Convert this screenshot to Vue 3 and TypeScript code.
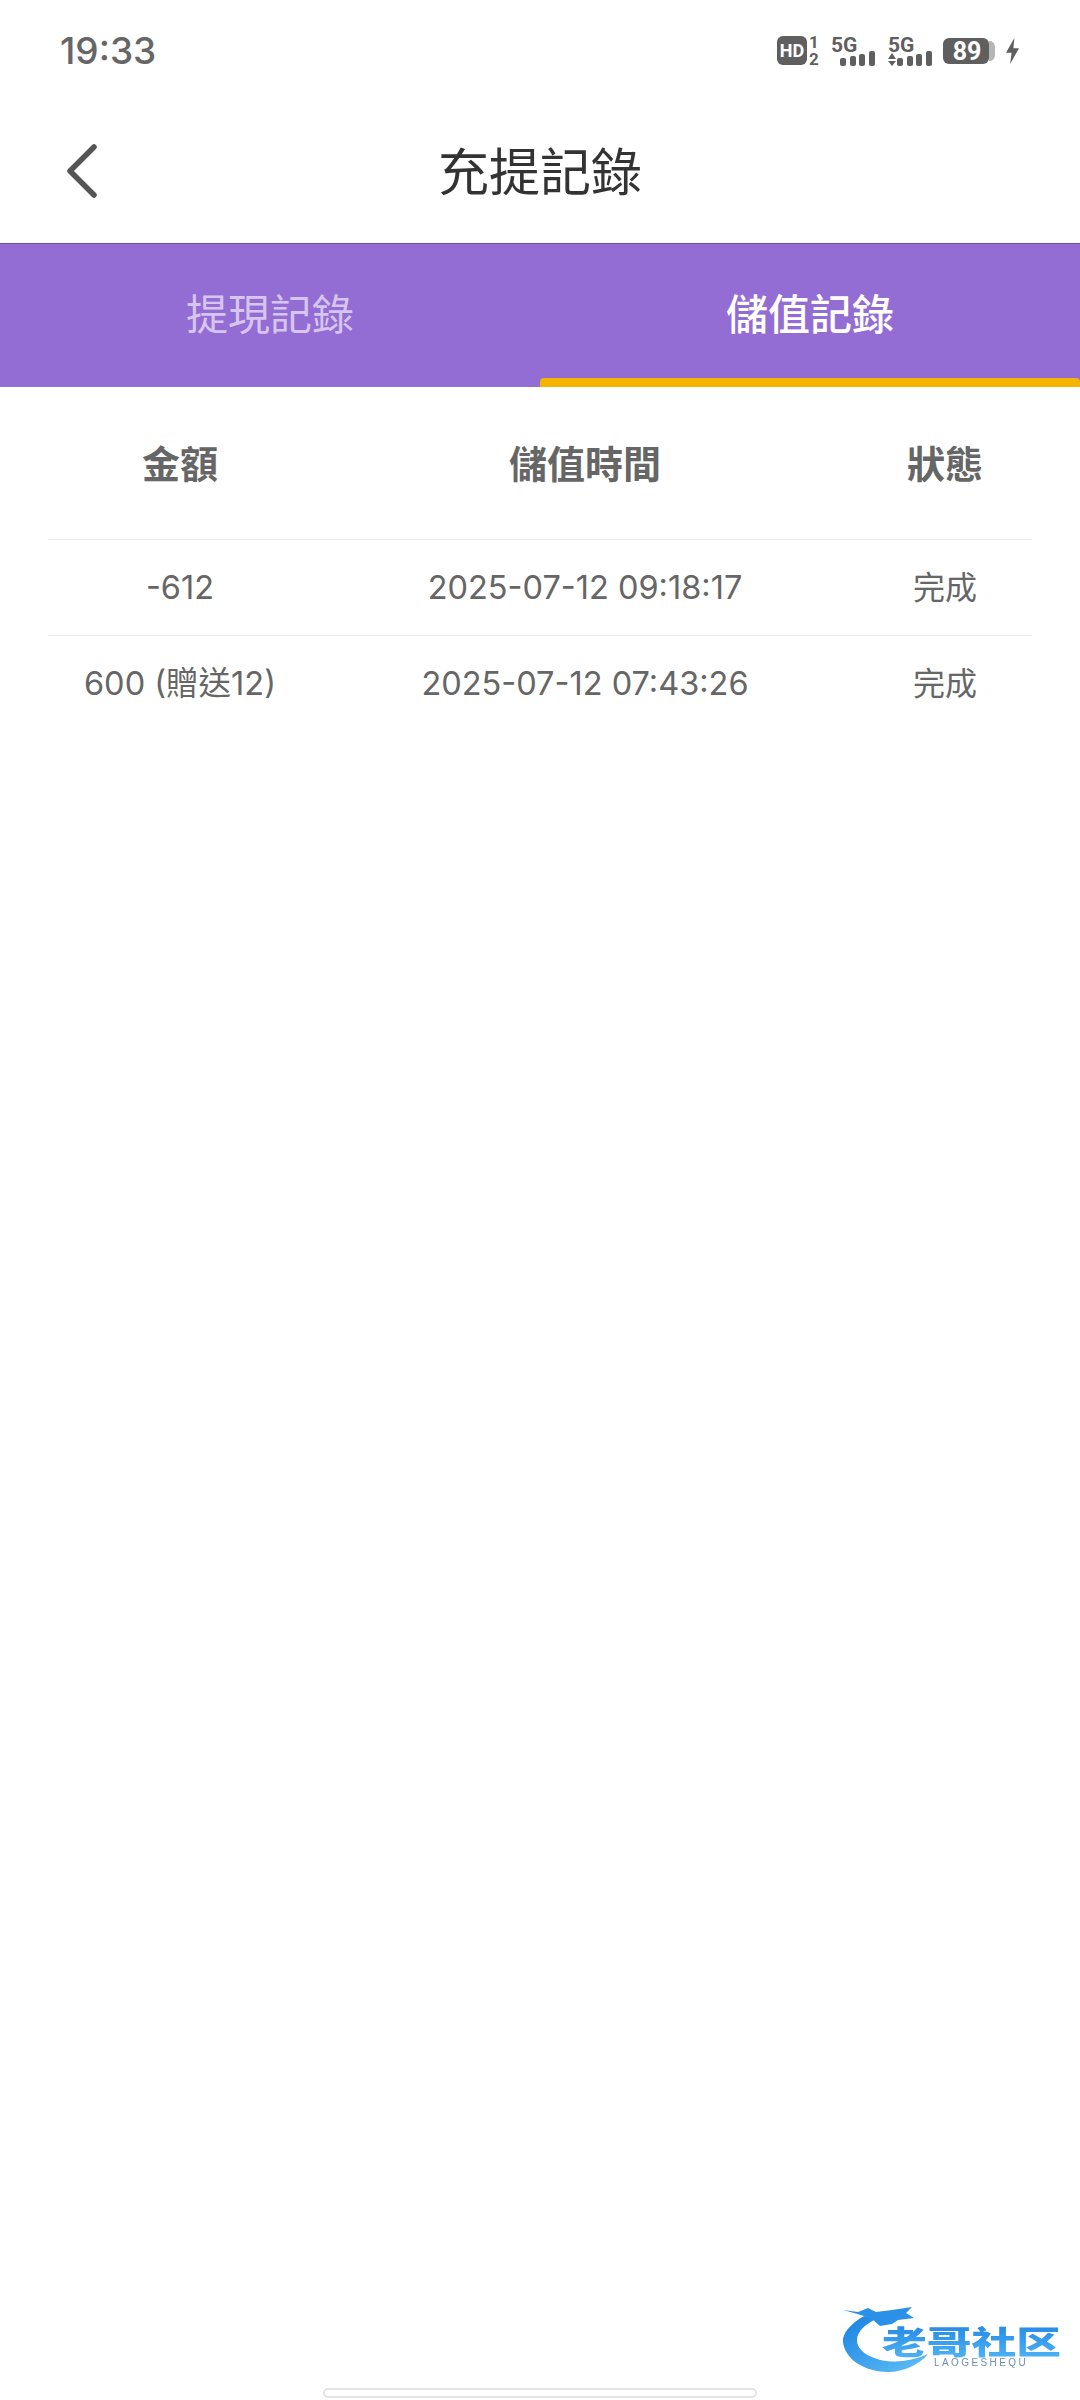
<script setup lang="ts">
import { ref } from 'vue'

interface RecordRow {
  amount: string
  time: string
  status: string
}

const tabs = ['提現記錄', '儲值記錄']
const activeTab = ref(1)

const rows: RecordRow[] = [
  { amount: '-612', time: '2025-07-12 09:18:17', status: '完成' },
  { amount: '600 (贈送12)', time: '2025-07-12 07:43:26', status: '完成' },
]

const bars = [
  { x: 9, h: 8 },
  { x: 19, h: 10 },
  { x: 28, h: 12 },
  { x: 38, h: 15 },
]
</script>

<template>
  <div class="page">
    <div class="status-bar">
      <span class="clock">19:33</span>
      <div class="status-icons">
        <svg class="hd" width="44" height="30" viewBox="0 0 44 30">
          <rect x="0" y="0" width="30" height="29" rx="6" fill="#5f5f5f" />
          <text x="15" y="21" text-anchor="middle" class="hd-text">HD</text>
          <text x="37" y="12" text-anchor="middle" class="sim-text">1</text>
          <text x="37" y="29" text-anchor="middle" class="sim-text">2</text>
        </svg>
        <svg class="net" width="46" height="30" viewBox="0 0 46 30">
          <text x="0" y="16" class="net-text">5G</text>
          <rect v-for="b in bars" :key="b.x" :x="b.x" :y="30 - b.h" width="6" :height="b.h" rx="2" fill="#5f5f5f" />
        </svg>
        <svg class="net" width="46" height="30" viewBox="0 0 46 30">
          <text x="0" y="16" class="net-text">5G</text>
          <path d="M0 23 L4 17 L8 23 Z M0 25 L8 25 L4 30 Z" fill="#5f5f5f" />
          <rect v-for="b in bars" :key="b.x" :x="b.x" :y="30 - b.h" width="6" :height="b.h" rx="2" fill="#5f5f5f" />
        </svg>
        <svg class="battery" width="53" height="27" viewBox="0 0 53 27">
          <rect x="0" y="0" width="46" height="26" rx="6" fill="#5f5f5f" />
          <path d="M46 3 H48 Q52 5 52 9 V17 Q52 21 48 23 H46 Z" fill="#b5b5b5" />
          <text x="24" y="22" text-anchor="middle" class="battery-text">89</text>
        </svg>
        <svg class="bolt" width="13" height="28" viewBox="0 0 14 28">
          <path d="M9 0 L0 16 H6 L4.5 28 L14 11 H8 Z" fill="#5f5f5f" />
        </svg>
      </div>
    </div>

    <header class="nav">
      <svg class="back" width="32" height="54" viewBox="0 0 32 54">
        <path d="M28 3 L4 27 L28 51" fill="none" stroke="#555" stroke-width="5.5" stroke-linecap="round" stroke-linejoin="round" />
      </svg>
      <h1 class="title">充提記錄</h1>
    </header>

    <nav class="tabs">
      <button
        v-for="(tab, index) in tabs"
        :key="tab"
        class="tab"
        :class="{ active: index === activeTab }"
        @click="activeTab = index"
      >
        {{ tab }}
      </button>
    </nav>

    <section class="table">
      <div class="row head">
        <span>金額</span>
        <span>儲值時間</span>
        <span>狀態</span>
      </div>
      <div v-for="row in rows" :key="row.time" class="row body">
        <span>{{ row.amount }}</span>
        <span>{{ row.time }}</span>
        <span class="status">{{ row.status }}</span>
      </div>
    </section>

    <svg class="watermark" width="226" height="70" viewBox="0 0 226 70">
      <defs>
        <linearGradient id="wmText" x1="0" y1="0" x2="0" y2="1">
          <stop offset="0" stop-color="#1a80e2" />
          <stop offset="1" stop-color="#55b8f6" />
        </linearGradient>
        <linearGradient id="wmArc" x1="0" y1="0" x2="1" y2="1">
          <stop offset="0" stop-color="#1a80e0" />
          <stop offset="1" stop-color="#62c2f7" />
        </linearGradient>
      </defs>
      <path d="M22 12 C8 20 0 30 1 38 C3 56 24 68 46 68 C62 68 78 60 86 50 C72 56 58 59 44 57 C26 54 15 46 15 36 C15 27 24 20 34 15 Z" fill="url(#wmArc)" />
      <path d="M1 6 L16 8 L26 4 L34 8 L50 6 L70 3 L64 9 L72 14 L56 16 L50 20 L38 22 L30 15 L22 12 L12 9 Z" fill="#2a90e8" />
      <text x="40" y="50" class="wm-title" transform="translate(40 50) scale(1.4 1) translate(-40 -50)" fill="url(#wmText)">老哥社区</text>
      <text x="92" y="62" class="wm-sub">LAOGESHEQU</text>
    </svg>

    <div class="home-bar"></div>
  </div>
</template>

<style>
body {
  background: #fff;
}
</style>

<style scoped>
.page {
  position: relative;
  width: 1080px;
  height: 2400px;
  overflow: hidden;
  background: #fff;
  font-family: 'Inter', 'Noto Sans CJK TC', sans-serif;
}

.status-bar {
  height: 100px;
  padding: 0 61px 0 60px;
  box-sizing: border-box;
  display: flex;
  align-items: center;
  justify-content: space-between;
}

.clock {
  font-size: 37px;
  font-weight: 500;
  color: #666;
}

.status-icons {
  display: flex;
  align-items: center;
  margin-top: 2px;
}

.status-icons svg {
  overflow: visible;
}

.hd {
  margin-right: 10px;
}

.net {
  margin-right: 11px;
}

.net + .net {
  margin-right: 9px;
}

.battery {
  margin-right: 10px;
}

.hd-text {
  font: 700 18px 'Roboto', sans-serif;
  fill: #fff;
}

.sim-text {
  font: 700 17px 'Roboto', sans-serif;
  fill: #5f5f5f;
}

.net-text {
  font: 700 21px 'Roboto', sans-serif;
  fill: #5f5f5f;
}

.battery-text {
  font: 700 25px 'Roboto', sans-serif;
  fill: #fff;
}

.nav {
  position: relative;
  height: 143px;
  display: flex;
  align-items: center;
  justify-content: center;
}

.back {
  position: absolute;
  left: 66px;
  top: 44px;
}

.title {
  margin: 0 0 5px;
  font-size: 51px;
  font-weight: 400;
  color: #333;
}

.tabs {
  height: 144px;
  box-sizing: border-box;
  display: flex;
  background: #936dd3;
  border-top: 1px solid #6d509e;
}

.tab {
  position: relative;
  flex: 1;
  padding: 0 0 8px;
  border: none;
  background: none;
  font-family: inherit;
  font-size: 42px;
  color: #d6c6ef;
  cursor: pointer;
}

.tab.active {
  color: #fff;
  font-weight: 500;
}

.tab.active::after {
  content: '';
  position: absolute;
  left: 0;
  right: 0;
  bottom: 0;
  height: 9px;
  border-radius: 4px 4px 0 0;
  background: #f4b400;
}

.table {
  padding: 0 48px;
}

.row {
  display: grid;
  grid-template-columns: 264px 546px 174px;
  align-items: center;
  text-align: center;
  color: #666;
}

.head {
  height: 152px;
  padding-bottom: 4px;
  box-sizing: border-box;
  font-size: 38px;
  font-weight: 700;
}

.body {
  height: 96px;
  box-sizing: border-box;
  border-top: 1px solid #ececec;
  font-size: 32.5px;
  line-height: 44px;
}

.status {
  font-size: 32px;
}

.watermark {
  position: absolute;
  left: 842px;
  top: 2304px;
  filter: blur(0.5px);
}

.wm-title {
  font: 900 32px 'Noto Sans CJK SC', sans-serif;
}

.wm-sub {
  font: 400 10px 'Liberation Sans', sans-serif;
  letter-spacing: 2.4px;
  fill: #6f8fb0;
}

.home-bar {
  position: absolute;
  left: 323px;
  top: 2388px;
  width: 434px;
  height: 10px;
  box-sizing: border-box;
  border: 2px solid #e4e4e4;
  border-radius: 5px;
}
</style>
